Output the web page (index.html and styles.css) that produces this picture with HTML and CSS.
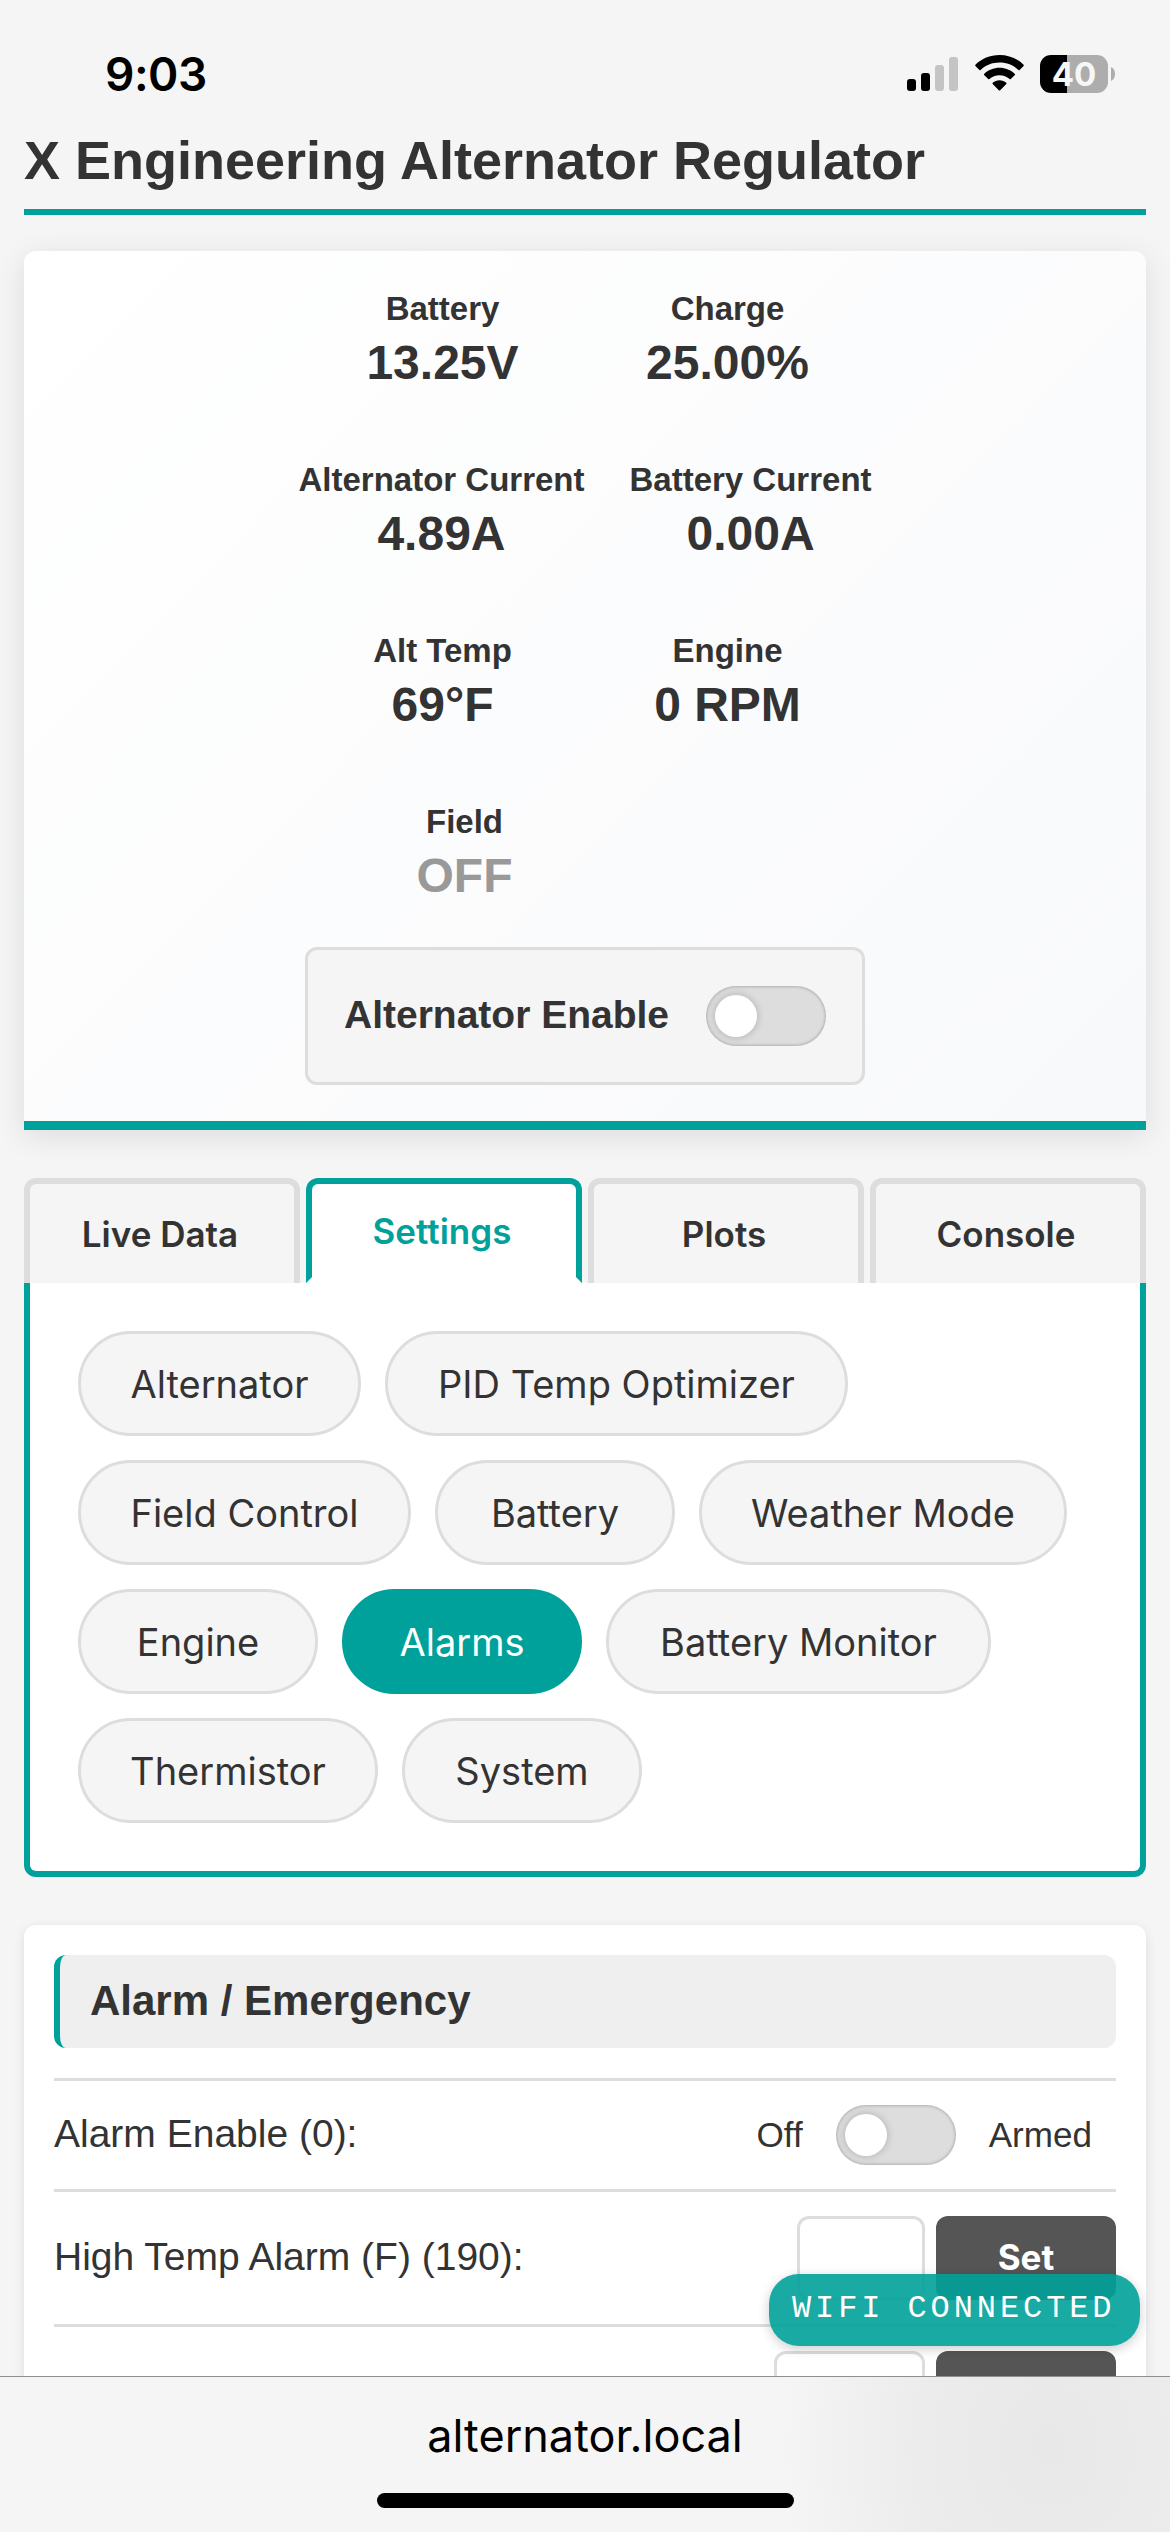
FILE: index.html
```html
<!DOCTYPE html>
<html lang="en">
<head>
<meta charset="utf-8">
<title>X Engineering Alternator Regulator</title>
<link rel="stylesheet" href="styles.css">
</head>
<body>
<div class="screen">
  <div class="status-bar">
    <span class="clock">9:03</span>
    <div class="status-icons">
      <svg class="signal" width="51" height="34" viewBox="0 0 51 34">
        <rect x="0" y="22" width="9" height="12" rx="3"/>
        <rect x="14" y="16" width="9" height="18" rx="3"/>
        <rect x="28" y="8" width="9" height="26" rx="3" fill="#c4c4c4"/>
        <rect x="42" y="0" width="9" height="34" rx="3" fill="#c4c4c4"/>
      </svg>
      <svg class="wifi" width="49" height="36" viewBox="0 0 49 36">
        <path d="M24.5 0C34 0 42.500 3.700 48.600 9.700Q49 10.300 48.600 10.900L44.600 15.100Q44 15.600 43.400 15.100C38.500 10.300 31.800 7.600 24.500 7.600S10.500 10.300 5.600 15.100Q5 15.600 4.400 15.100L.4 10.900Q0 10.300.4 9.700C6.500 3.700 15 0 24.500 0Z"/>
        <path d="M24.500 12.800C30.500 12.800 35.900 15.100 39.900 18.900Q40.400 19.500 39.900 20.100L35.800 24.100Q35.200 24.500 34.600 24.100C31.900 21.700 28.400 20.200 24.500 20.200S17.100 21.700 14.400 24.100Q13.800 24.500 13.200 24.100L9.100 20.100Q8.600 19.500 9.100 18.900C13.100 15.100 18.500 12.800 24.500 12.800Z"/>
        <path d="M24.500 25.200C27.100 25.200 29.500 26.100 31.300 27.700Q31.900 28.300 31.300 28.900L25.200 35.300Q24.500 35.900 23.800 35.300L17.700 28.900Q17.100 28.300 17.700 27.700C19.500 26.100 21.900 25.200 24.500 25.200Z"/>
      </svg>
      <div class="battery"><span class="battery-level">40</span></div>
      <svg class="battery-nub" width="4" height="14" viewBox="0 0 4 14"><path d="M0 0Q4 2 4 7T0 14Z" fill="#adadad"/></svg>
    </div>
  </div>

  <main class="page">
    <h1 class="title">X Engineering Alternator Regulator</h1>

    <section class="summary">
      <div class="readings">
        <div class="reading-row">
          <div class="reading"><span class="label">Battery</span><span class="value">13.25V</span></div>
          <div class="reading"><span class="label">Charge</span><span class="value">25.00%</span></div>
        </div>
        <div class="reading-row">
          <div class="reading"><span class="label">Alternator Current</span><span class="value">4.89A</span></div>
          <div class="reading"><span class="label">Battery Current</span><span class="value">0.00A</span></div>
        </div>
        <div class="reading-row">
          <div class="reading"><span class="label">Alt Temp</span><span class="value">69°F</span></div>
          <div class="reading"><span class="label">Engine</span><span class="value">0 RPM</span></div>
        </div>
        <div class="reading-row">
          <div class="reading"><span class="label">Field</span><span class="value value-off">OFF</span></div>
          <div class="reading-spacer"></div>
        </div>
      </div>
      <div class="enable-box">
        <span class="enable-label">Alternator Enable</span>
        <span class="toggle"></span>
      </div>
    </section>

    <nav class="tabs">
      <div class="tab">Live Data</div>
      <div class="tab tab-active">Settings</div>
      <div class="tab">Plots</div>
      <div class="tab">Console</div>
    </nav>
    <section class="tab-panel">
      <span class="pill w-alternator">Alternator</span>
      <span class="pill w-pid">PID Temp Optimizer</span>
      <span class="pill w-field">Field Control</span>
      <span class="pill">Battery</span>
      <span class="pill w-weather">Weather Mode</span>
      <span class="pill">Engine</span>
      <span class="pill pill-active">Alarms</span>
      <span class="pill w-monitor">Battery Monitor</span>
      <span class="pill w-thermistor">Thermistor</span>
      <span class="pill">System</span>
    </section>

    <section class="card">
      <h2 class="card-title">Alarm / Emergency</h2>
      <div class="setting setting-toggle">
        <span class="setting-name">Alarm Enable (0):</span>
        <div class="switch"><span>Off</span><span class="toggle"></span><span>Armed</span></div>
      </div>
      <div class="setting">
        <span class="setting-name">High Temp Alarm (F) (190):</span>
        <div class="entry"><span class="field"></span><span class="set-button">Set</span></div>
      </div>
      <div class="setting">
        <span class="setting-name"></span>
        <div class="entry"><span class="field field-wide"></span><span class="set-button"></span></div>
      </div>
    </section>
  </main>

  <div class="wifi-badge">WIFI CONNECTED</div>

  <footer class="browser-bar">
    <span class="address">alternator.local</span>
    <span class="home-indicator"></span>
  </footer>
</div>
</body>
</html>
```
FILE: styles.css
```css
* { box-sizing: border-box; }

body {
  margin: 0;
  background: #f5f5f5;
  color: #333;
  font-family: "Liberation Sans", Arial, sans-serif;
}

.screen {
  position: relative;
  display: flex;
  flex-direction: column;
  width: 1170px;
  height: 2532px;
  overflow: hidden;
}

/* Phone status bar */
.status-bar {
  display: flex;
  flex: none;
  justify-content: space-between;
  height: 126px;
  padding: 55px 55px 0 105px;
  color: #000;
}
.clock {
  margin-top: -11px;
  font: 600 46px/60px Inter, sans-serif;
  letter-spacing: -0.5px;
}
.status-icons { display: flex; align-items: flex-start; }
.signal { margin-top: 2px; }
.wifi { margin-left: 17px; }
.battery {
  width: 68px;
  height: 38px;
  margin-left: 16px;
  border-radius: 11px;
  background: linear-gradient(90deg, #000 27px, #adadad 27px);
  color: #f7f7f7;
  text-align: center;
}
.battery-level { font: 700 33px/38px Inter, sans-serif; }
.battery-nub { margin: 12px 0 0 3px; }

/* Page */
.page {
  flex: 1;
  min-height: 0;
  padding: 0 24px;
  overflow: hidden;
}
.title {
  margin: 0 0 36px;
  padding-bottom: 15px;
  border-bottom: 6px solid #00a19a;
  font-size: 54px;
  line-height: 68px;
  white-space: nowrap;
}

.summary {
  display: flex;
  flex-direction: column;
  align-items: center;
  height: 879px;
  padding-top: 38px;
  border-bottom: 9px solid #00a19a;
  border-radius: 12px 12px 0 0;
  background: linear-gradient(135deg, #fff, #f8f9fb);
  box-shadow: 0 6px 30px rgba(0, 0, 0, 0.1);
}
.readings { display: flex; flex-direction: column; gap: 68px; }
.reading-row { display: flex; justify-content: center; gap: 45px; }
.reading {
  display: flex;
  flex-direction: column;
  align-items: center;
  gap: 6px;
  min-width: 240px;
  height: 103px;
  font-weight: 700;
}
.reading-spacer { width: 196px; }
.label { font-size: 33px; line-height: 40px; }
.value { font-size: 48px; line-height: 56px; }
.value-off { color: #999; }

.enable-box {
  display: flex;
  align-items: center;
  justify-content: space-between;
  width: 560px;
  height: 138px;
  margin-top: 42px;
  padding: 0 36px;
  border: 3px solid #ddd;
  border-radius: 12px;
  background: #f5f5f5;
}
.enable-label { padding-bottom: 3px; font-size: 39px; font-weight: 700; }

.toggle {
  display: block;
  width: 120px;
  height: 60px;
  padding: 9px;
  border-radius: 30px;
  background: #ddd;
  box-shadow: inset 0 0 3px 1px rgba(0, 0, 0, 0.2);
}
.toggle::before {
  display: block;
  width: 42px;
  height: 42px;
  border-radius: 50%;
  background: #fff;
  box-shadow: 0 0 9px rgba(0, 0, 0, 0.22);
  content: "";
}

/* Tabs */
.tabs { display: flex; gap: 6px; height: 105px; margin-top: 48px; }
.tab {
  display: flex;
  flex: 1 1 0;
  align-items: center;
  justify-content: center;
  padding-right: 4px;
  border: 6px solid #ddd;
  border-bottom: 0;
  border-radius: 12px 12px 0 0;
  font: 600 35px Inter, sans-serif;
}
.tab-active {
  border-color: #00a19a;
  border-bottom: 6px solid #fff;
  background: #fff;
  color: #00a19a;
}
.tab-panel {
  display: flex;
  flex-wrap: wrap;
  gap: 24px;
  padding: 48px;
  border: 6px solid #00a19a;
  border-top: 0;
  border-radius: 0 0 12px 12px;
  background: #fff;
}
.pill {
  display: flex;
  align-items: center;
  justify-content: center;
  width: 240px;
  height: 105px;
  border: 3px solid #ddd;
  border-radius: 53px;
  background: #f5f5f5;
  font: 400 38px Inter, sans-serif;
  white-space: nowrap;
}
.pill-active { border-color: #00a19a; background: #00a19a; color: #fff; }
.w-alternator { width: 283px; }
.w-pid { width: 463px; }
.w-field { width: 333px; }
.w-weather { width: 368px; }
.w-monitor { width: 385px; }
.w-thermistor { width: 300px; }

/* Settings card */
.card {
  height: 620px;
  margin-top: 48px;
  padding: 30px;
  border-radius: 12px;
  background: #fff;
  box-shadow: 0 3px 12px rgba(0, 0, 0, 0.1);
}
.card-title {
  height: 93px;
  margin: 0 0 30px;
  padding-left: 30px;
  border-left: 6px solid #00a19a;
  border-radius: 12px;
  background: #efefef;
  font-size: 42px;
  line-height: 91px;
}
.setting {
  display: flex;
  align-items: center;
  justify-content: space-between;
  height: 135px;
  border-top: 3px solid #ddd;
}
.setting-toggle { height: 111px; }
.setting-name { padding-bottom: 3px; font-size: 39px; }
.switch {
  display: flex;
  align-items: center;
  gap: 33px;
  padding-right: 24px;
  font-size: 35.1px;
}
.entry { display: flex; gap: 11px; }
.field {
  width: 128px;
  height: 84px;
  border: 3px solid #ddd;
  border-radius: 12px;
  background: #fff;
}
.field-wide { width: 151px; }
.set-button {
  width: 180px;
  height: 84px;
  border-radius: 12px;
  background: #555;
  color: #fff;
  font: 700 35px/82px Inter, sans-serif;
  text-align: center;
}

/* Floating connection badge */
.wifi-badge {
  position: absolute;
  top: 2274px;
  left: 769px;
  width: 371px;
  height: 72px;
  padding-left: 23px;
  border-radius: 30px;
  background: rgba(0, 161, 154, 0.9);
  box-shadow: 0 3px 12px rgba(0, 0, 0, 0.2);
  color: #fff;
  font: 32px/70px "Liberation Mono", "Courier New", monospace;
  letter-spacing: 3.9px;
  white-space: nowrap;
}

/* Browser address bar */
.browser-bar {
  position: relative;
  display: flex;
  flex: none;
  flex-direction: column;
  align-items: center;
  height: 156px;
  border-top: 1px solid #8f8f8f;
  background: radial-gradient(ellipse 270px 330px at 1050px 70px, #e8e8e8, #ececec 50%, #f5f5f5);
  color: #000;
}
.address { margin-top: 29px; font: 400 45px/60px Inter, sans-serif; }
.home-indicator {
  width: 417px;
  height: 15px;
  margin-top: 27px;
  border-radius: 8px;
  background: #000;
}
```
